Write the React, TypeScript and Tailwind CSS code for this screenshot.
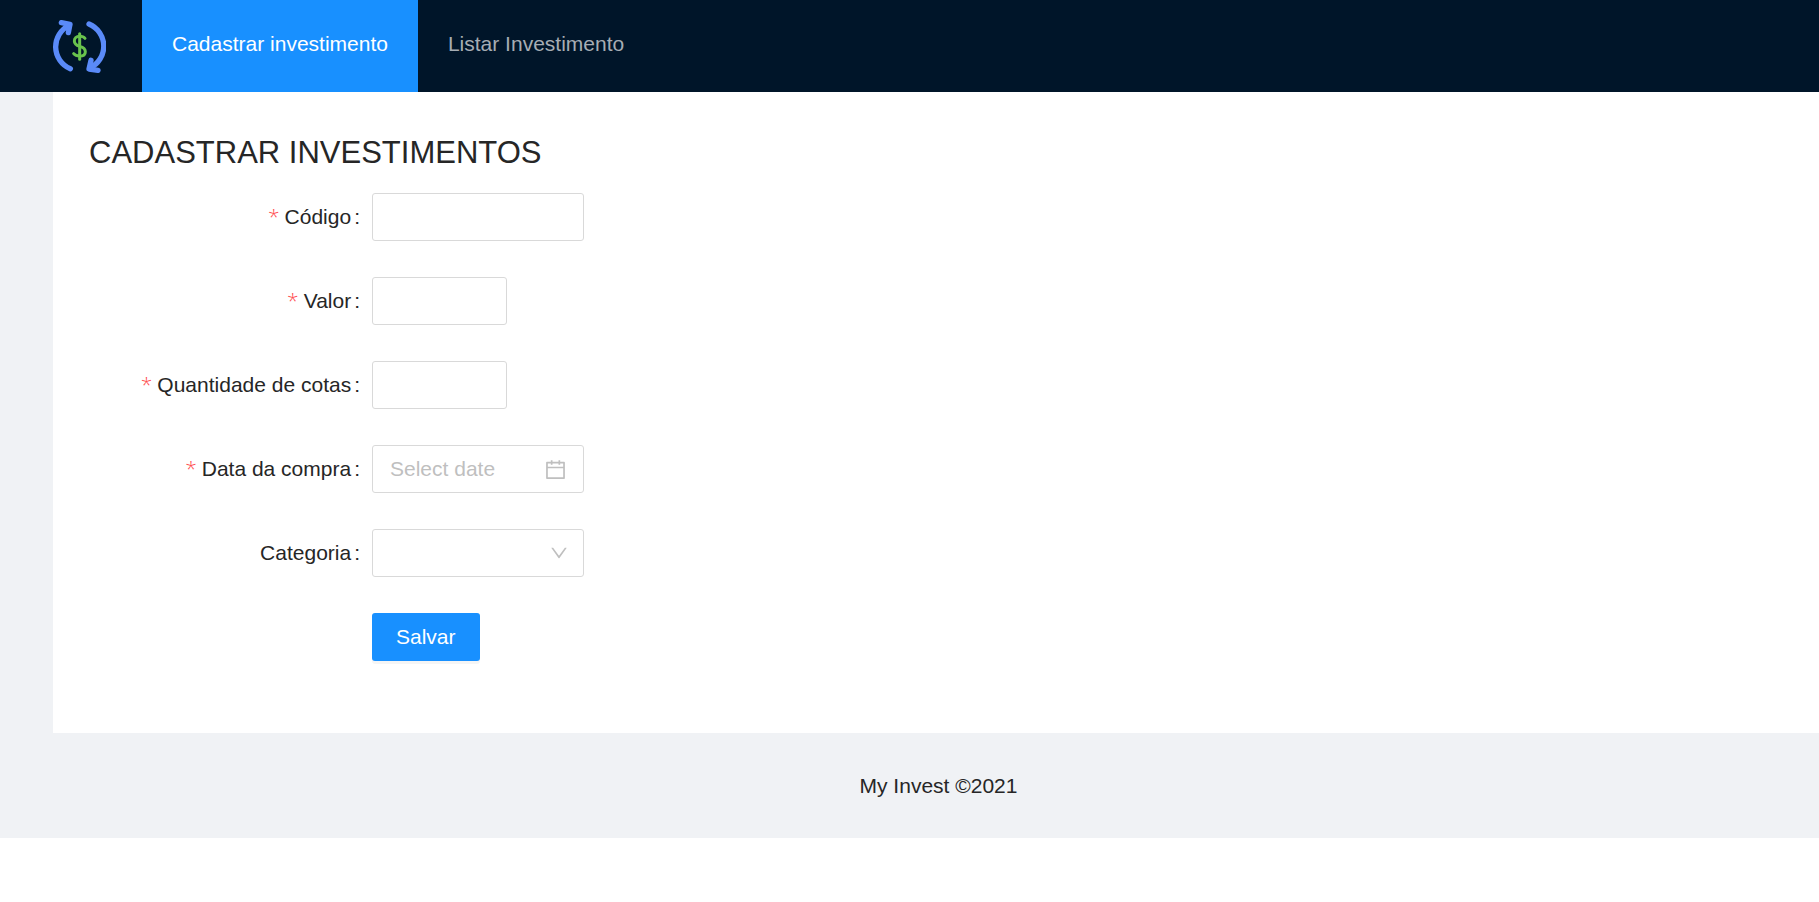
import React from "react";

function Logo() {
  return (
    <svg viewBox="39 30 159 159" className="size-[53px]" fill="none" strokeLinecap="round" strokeLinejoin="round" role="img" aria-label="My Invest">
      <g stroke="#5a8af8" strokeWidth="16">
        <path d="M91 176A71 71 0 0 1 88 46" />
        <path d="M64 38L90 43L85 68" />
        <path d="M147 42A72 72 0 0 1 149 174" />
        <path d="M153 151L147 177L174 181" />
      </g>
      <g stroke="#69c34d" strokeWidth="9">
        <path d="M119 71V148" />
        <path d="M135 85C131 80 126 79 119 79C109 79 103 85 103 93C103 102 109 106 119 109C130 112 136 116 136 125C136 134 129 138 119 138C111 138 105 136 101 131" />
      </g>
    </svg>
  );
}

function CalendarIcon() {
  return (
    <svg viewBox="64 64 896 896" className="size-[21px] shrink-0" fill="#bfbfbf" aria-hidden="true">
      <path d="M880 184H712v-64c0-4.4-3.6-8-8-8h-56c-4.4 0-8 3.6-8 8v64H384v-64c0-4.4-3.6-8-8-8h-56c-4.4 0-8 3.6-8 8v64H144c-17.7 0-32 14.3-32 32v664c0 17.7 14.3 32 32 32h736c17.7 0 32-14.3 32-32V216c0-17.7-14.3-32-32-32zm-40 656H184V460h656v380zM184 392V256h128v48c0 4.4 3.6 8 8 8h56c4.4 0 8-3.6 8-8v-48h256v48c0 4.4 3.6 8 8 8h56c4.4 0 8-3.6 8-8v-48h128v136H184z" />
    </svg>
  );
}

function DownIcon() {
  return (
    <svg viewBox="64 64 896 896" className="pointer-events-none absolute top-1/2 right-4 size-[18px] -translate-y-1/2" fill="#bfbfbf" aria-hidden="true">
      <path d="M884 256h-75c-5.1 0-9.9 2.5-12.9 6.6L512 654.2 227.9 262.6c-3-4.1-7.8-6.6-12.9-6.6h-75c-6.5 0-10.3 7.4-6.5 12.7l352.6 486.1c12.8 17.6 39 17.6 51.7 0l352.6-486.1c3.9-5.3.1-12.7-6.4-12.7z" />
    </svg>
  );
}

type FieldProps = { id: string; label: string; required?: boolean; children: React.ReactNode };

function Field({ id, label, required, children }: FieldProps) {
  return (
    <div className="flex items-center">
      <div className="flex w-[283px] shrink-0 justify-end pr-3">
        <label htmlFor={id} className="flex items-baseline">
          {required && (
            <span className="mr-[5px] font-['Open_Sans',sans-serif] leading-none font-light text-[#ff4d4f]" aria-hidden="true">*</span>
          )}
          {label}
          <span className="ml-[3px]">:</span>
        </label>
      </div>
      {children}
    </div>
  );
}

const box = "h-12 rounded-[3px] border border-[#d9d9d9] bg-white outline-none";

export default function App() {
  return (
    <div className="bg-[#f0f2f5] font-['Liberation_Sans',Arial,sans-serif] text-[21px] leading-[33px] text-[#262626]">
      <header className="flex h-[92px] bg-[#001529] pl-[53px]">
        <div className="mr-9 pt-5">
          <Logo />
        </div>
        <nav className="flex leading-[88px]">
          <a href="#cadastrar" aria-current="page" className="bg-[#1890ff] px-[30px] text-white">Cadastrar investimento</a>
          <a href="#listar" className="px-[30px] text-[#a6adb4]">Listar Investimento</a>
        </nav>
      </header>
      <div className="pl-[53px]">
        <main className="bg-white p-9">
          <h2 className="mb-4 text-[31px] leading-[49px]">CADASTRAR INVESTIMENTOS</h2>
          <form className="flex flex-col gap-9 pb-9 leading-8" onSubmit={(e) => e.preventDefault()}>
            <Field id="codigo" label="Código" required>
              <input id="codigo" type="text" className={`${box} w-[212px] px-4`} />
            </Field>
            <Field id="valor" label="Valor" required>
              <input id="valor" type="text" inputMode="decimal" className={`${box} w-[135px] px-4`} />
            </Field>
            <Field id="cotas" label="Quantidade de cotas" required>
              <input id="cotas" type="text" inputMode="numeric" className={`${box} w-[135px] px-4`} />
            </Field>
            <Field id="data" label="Data da compra" required>
              <div className={`${box} flex w-[212px] items-center px-[17px]`}>
                <input id="data" type="text" placeholder="Select date" className="min-w-0 flex-1 outline-none placeholder:text-[#bfbfbf]" />
                <CalendarIcon />
              </div>
            </Field>
            <Field id="categoria" label="Categoria">
              <div className="relative w-[212px]">
                <select id="categoria" defaultValue="" className={`${box} block w-full appearance-none px-4`}>
                  <option value=""></option>
                </select>
                <DownIcon />
              </div>
            </Field>
            <div className="pl-[283px]">
              <button type="submit" className="block h-12 rounded-[3px] bg-[#1890ff] px-6 text-white shadow-[0_3px_0_rgba(0,0,0,0.04)]">Salvar</button>
            </div>
          </form>
        </main>
        <footer className="py-9 pr-[75px] pl-20 text-center">My Invest ©2021</footer>
      </div>
    </div>
  );
}
